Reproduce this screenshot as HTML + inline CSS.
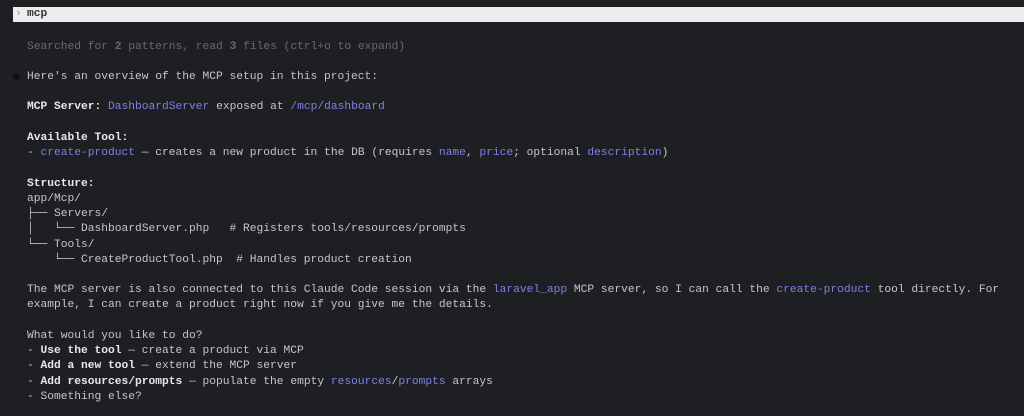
<!DOCTYPE html>
<html><head><meta charset="utf-8"><style>
html,body{margin:0;padding:0;width:1024px;height:416px;overflow:hidden;background:#1e1f22;}
.bar{position:absolute;left:13px;top:7px;width:1011px;height:15px;background:#ececec;font:bold 11.25px/15px "Liberation Mono",monospace;color:#333;}
.bar .ch{position:absolute;left:2px;top:0;color:#999;font-weight:normal}
.bar .t{position:absolute;left:14px;top:0}
pre{position:absolute;left:27px;top:39.5px;margin:0;font:11.25px/15.23px "Liberation Mono",monospace;color:#c6c6c6;}
.g{color:#6a6a6a}
.b{font-weight:bold;color:#e8e8e8}
.u{color:#7d80e6}
.dot{position:absolute;left:13px;top:73px;width:7px;height:7px;border-radius:50%;background:#111;}
</style></head><body>
<div class="bar"><span class="ch">›</span><span class="t">mcp</span></div>
<div class="dot"></div>
<pre><span class="g">Searched for <b>2</b> patterns, read <b>3</b> files (ctrl+o to expand)</span>

Here's an overview of the MCP setup in this project:

<span class="b">MCP Server:</span> <span class="u">DashboardServer</span> exposed at <span class="u">/mcp/dashboard</span>

<span class="b">Available Tool:</span>
- <span class="u">create-product</span> — creates a new product in the DB (requires <span class="u">name</span>, <span class="u">price</span>; optional <span class="u">description</span>)

<span class="b">Structure:</span>
app/Mcp/
├── Servers/
│   └── DashboardServer.php   # Registers tools/resources/prompts
└── Tools/
    └── CreateProductTool.php  # Handles product creation

The MCP server is also connected to this Claude Code session via the <span class="u">laravel_app</span> MCP server, so I can call the <span class="u">create-product</span> tool directly. For
example, I can create a product right now if you give me the details.

What would you like to do?
- <span class="b">Use the tool</span> — create a product via MCP
- <span class="b">Add a new tool</span> — extend the MCP server
- <span class="b">Add resources/prompts</span> — populate the empty <span class="u">resources</span>/<span class="u">prompts</span> arrays
- Something else?</pre>
</body></html>
